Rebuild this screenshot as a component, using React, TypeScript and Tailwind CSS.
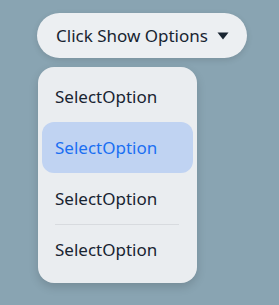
const options = ["SelectOption", "SelectOption", "SelectOption", "SelectOption"]

export default function App() {
  const selected = 1
  return (
    <div
      className="w-[279px] h-[305px] bg-[#89a4b2] pt-[13px] pl-[37px]"
      style={{ fontFamily: "'Noto Sans', Roboto, sans-serif" }}
    >
      <button className="flex items-center w-[210px] h-[45px] rounded-full bg-[#eceff2] pl-[19px] shadow-[0_2px_6px_rgba(0,0,0,0.12)]">
        <span className="text-[17px] text-[#182431]">Click Show Options</span>
        <svg width="12" height="8" viewBox="0 0 12 8" className="ml-[9px]">
          <path d="M0.5 0.5 L11.5 0.5 L6 7.5 Z" fill="#182431" />
        </svg>
      </button>
      <div className="mt-[9px] ml-px w-[159px] h-[216px] rounded-[16px] bg-[#eaedf0] px-[4px] pt-[4px] shadow-[0_4px_10px_rgba(0,0,0,0.15)]">
        {options.map((o, i) => {
          const isSel = i === selected
          const showDivider = i > 0 && i !== selected && i - 1 !== selected
          return (
            <div key={i} className="relative">
              {showDivider && (
                <div className="absolute top-0 left-[13px] right-[14px] h-px bg-[#d8dbdf]" />
              )}
              <div
                className={
                  "h-[51px] flex items-center pl-[13px] text-[17px] rounded-[12px] " +
                  (isSel ? "bg-[#c0d3f2] text-[#1a6ff2]" : "text-[#182431]")
                }
              >
                {o}
              </div>
            </div>
          )
        })}
      </div>
    </div>
  )
}
